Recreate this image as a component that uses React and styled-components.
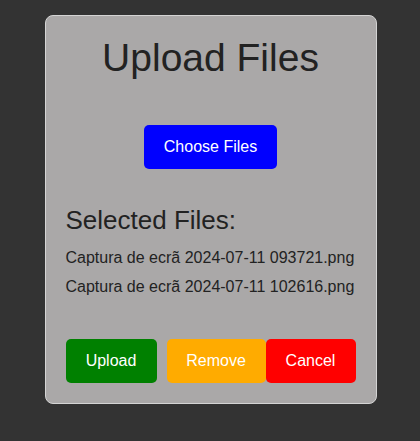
import styled, { createGlobalStyle } from "styled-components";

const GlobalStyle = createGlobalStyle`
  body {
    margin: 0;
    background: #333333;
    font-family: "Liberation Sans", Arial, sans-serif;
  }
`;

const SPage = styled.div`
  display: flex;
  justify-content: center;
  align-items: flex-start;
  padding-top: 15px;
  min-height: 441px;
  box-sizing: border-box;
`;

const SCard = styled.div`
  width: 332px;
  box-sizing: border-box;
  margin-left: 1px;
  padding: 20px;
  background: #aaa8a8;
  border: 1px solid #d4d4d4;
  border-radius: 8px;
  color: #222222;
`;

const STitle = styled.h1`
  margin: -1px 0 0;
  text-align: center;
  font-size: 39px;
  font-weight: normal;
  line-height: 45px;
`;

const SChooseRow = styled.div`
  display: flex;
  justify-content: center;
  margin-top: 45px;
`;

const SButton = styled.button`
  height: 44px;
  padding: 0 20px;
  border: none;
  border-radius: 5px;
  background: ${(p) => p.$bg};
  color: #ffffff;
  font-family: inherit;
  font-size: 16px;
  cursor: pointer;
`;

const SSubTitle = styled.h2`
  margin: 36px 0 0;
  font-size: 26px;
  font-weight: normal;
  line-height: 30px;
`;

const SList = styled.ul`
  list-style: none;
  margin: 8px 0 0;
  padding: 0;
`;

const SItem = styled.li`
  font-size: 16px;
  line-height: 29px;
`;

const SActions = styled.div`
  display: flex;
  margin-top: 38px;
`;

const SUpload = styled(SButton)`
  width: 91px;
  padding: 0;
  margin-right: 10px;
`;

const SRemove = styled(SButton)`
  width: 99px;
  padding: 0;
`;

const SCancel = styled(SButton)`
  width: 90px;
  padding: 0;
`;

const files = [
  "Captura de ecrã 2024-07-11 093721.png",
  "Captura de ecrã 2024-07-11 102616.png",
];

export default function App() {
  return (
    <>
      <GlobalStyle />
      <SPage>
        <SCard>
          <STitle>Upload Files</STitle>
          <SChooseRow>
            <SButton $bg="#0000ff">Choose Files</SButton>
          </SChooseRow>
          <SSubTitle>Selected Files:</SSubTitle>
          <SList>
            {files.map((f) => (
              <SItem key={f}>{f}</SItem>
            ))}
          </SList>
          <SActions>
            <SUpload $bg="#008000">Upload</SUpload>
            <SRemove $bg="#ffab00">Remove</SRemove>
            <SCancel $bg="#ff0000">Cancel</SCancel>
          </SActions>
        </SCard>
      </SPage>
    </>
  );
}
